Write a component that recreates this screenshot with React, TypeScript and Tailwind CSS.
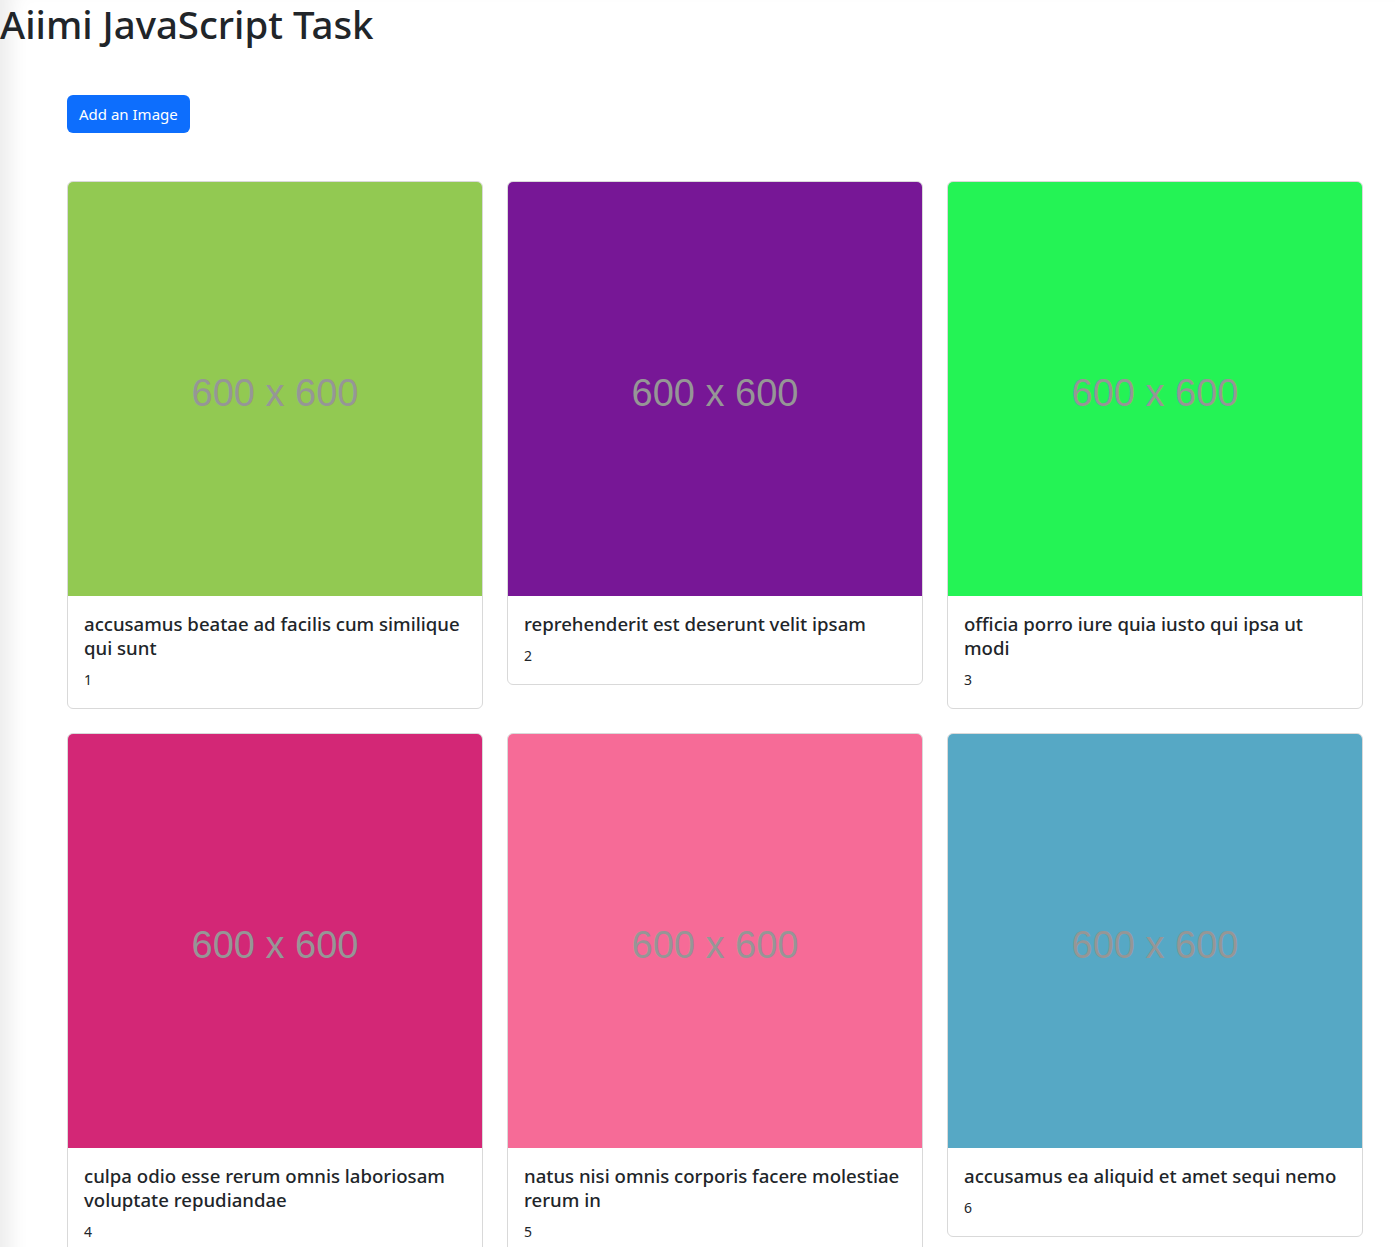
const photos = [
  { id: 1, title: "accusamus beatae ad facilis cum similique qui sunt", color: "bg-[#92c952]" },
  { id: 2, title: "reprehenderit est deserunt velit ipsam", color: "bg-[#771796]" },
  { id: 3, title: "officia porro iure quia iusto qui ipsa ut modi", color: "bg-[#24f355]" },
  { id: 4, title: "culpa odio esse rerum omnis laboriosam voluptate repudiandae", color: "bg-[#d32776]" },
  { id: 5, title: "natus nisi omnis corporis facere molestiae rerum in", color: "bg-[#f66b97]" },
  { id: 6, title: "accusamus ea aliquid et amet sequi nemo", color: "bg-[#56a8c5]" },
]

const PhotoCard = ({ id, title, color }: { id: number; title: string; color: string }) => {
  return (
    <div className="border border-[#d9d9d9] rounded-md bg-white overflow-hidden">
      <div className={`${color} aspect-square flex items-center justify-center pt-2`}>
        <span className="font-['Liberation_Sans',Arial,sans-serif] text-[38px] text-[#969696]">600 x 600</span>
      </div>
      <div className="p-4">
        <p className="text-[18.6px] leading-[24px] font-medium text-[#212529] mb-2">{title}</p>
        <p className="text-sm leading-6 text-[#212529]">{id}</p>
      </div>
    </div>
  )
}

const App = () => {
  return (
    <div className="min-h-screen bg-white font-['Noto_Sans',sans-serif] shadow-[inset_24px_0_20px_-14px_rgba(0,0,0,0.08)]">
      <h1 className="text-[38.4px] leading-[48px] font-medium text-[#212529] mb-2">Aiimi JavaScript Task</h1>
      <div className="pl-[67px] pr-8 pb-6">
        <button className="mt-[39px] bg-[#0d6efd] text-white text-[15px] leading-6 px-3 py-[7px] rounded-md">Add an Image</button>
        <div className="grid grid-cols-[repeat(3,416px)] gap-x-6 gap-y-6 items-start mt-[48px]">
          {photos.map((p) => (
            <PhotoCard key={p.id} {...p} />
          ))}
        </div>
      </div>
    </div>
  )
}

export default App
